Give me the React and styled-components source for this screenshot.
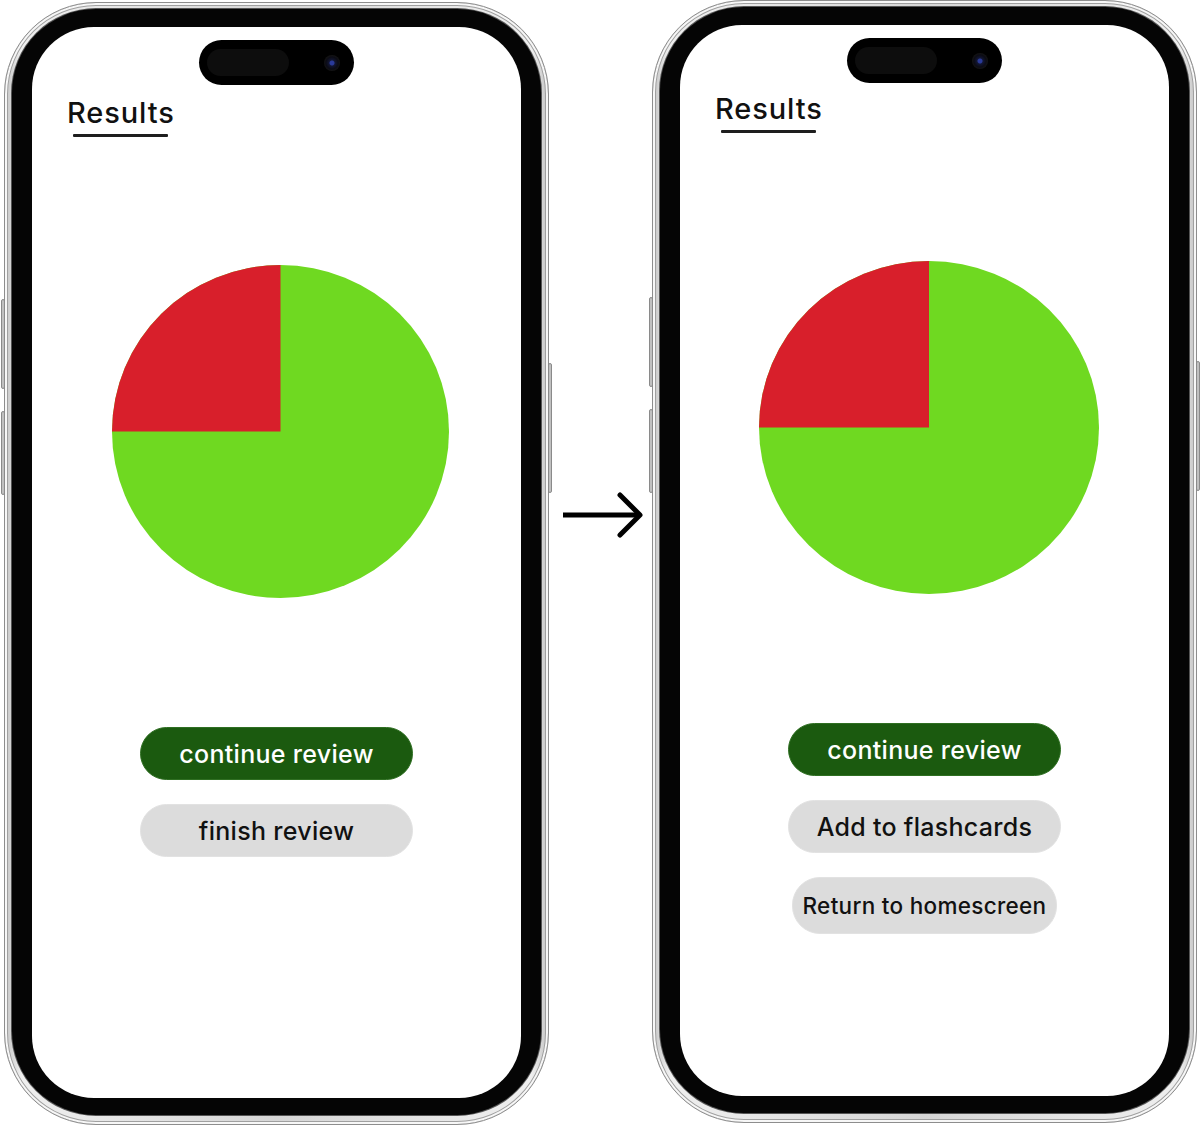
import React from "react";
import styled, { createGlobalStyle } from "styled-components";

const Global = createGlobalStyle`
  html, body { margin: 0; padding: 0; background: #ffffff; }
  body { font-family: Inter, "Noto Sans", "Liberation Sans", sans-serif; }
  * { box-sizing: border-box; }
`;

const Stage = styled.div`
  width: 1200px;
  height: 1127px;
  display: flex;
  align-items: flex-start;
  padding-left: 4px;
  overflow: hidden;
`;

const Phone = styled.div`
  position: relative;
  flex: 0 0 auto;
  width: 545px;
  height: 1123px;
  margin-top: ${(p) => p.$top}px;
  padding: 6px 7px 9px;
  border-radius: 92px;
  background: linear-gradient(90deg, #c4c4c4, #efefef 3%, #d6d6d6 50%, #efefef 97%, #c4c4c4);
  border: 1px solid #8d8d8d;
  box-shadow: inset 0 0 0 2px #f7f7f7, inset 0 0 0 3px #a0a0a0;
`;

const SideButton = styled.span`
  position: absolute;
  top: ${(p) => p.$y}px;
  ${(p) => (p.$side === "left" ? "left: -4px;" : "right: -4px;")}
  width: 4px;
  height: ${(p) => p.$h}px;
  border-radius: 2px;
  background: linear-gradient(90deg, #9a9a9a, #e6e6e6, #9a9a9a);
  border: 1px solid #8a8a8a;
`;

const Bezel = styled.div`
  width: 100%;
  height: 100%;
  padding: 18px 20px 17px;
  border-radius: 84px;
  background: #050505;
  box-shadow: 0 0 0 1px #555;
`;

const Screen = styled.div`
  width: 100%;
  height: 100%;
  border-radius: 62px;
  background: #ffffff;
  display: flex;
  flex-direction: column;
  align-items: center;
  padding-top: ${(p) => p.$pad}px;
  overflow: hidden;
`;

const Island = styled.div`
  width: 155px;
  height: 45px;
  border-radius: 23px;
  background: #000;
  display: flex;
  align-items: center;
  justify-content: space-between;
  padding: 0 14px 0 8px;
`;

const IslandSensor = styled.div`
  width: 82px;
  height: 27px;
  border-radius: 14px;
  background: #0d0d0d;
`;

const Camera = styled.div`
  width: 16px;
  height: 16px;
  border-radius: 50%;
  background: radial-gradient(circle at 50% 50%, #2a3a9a 0 2px, #121633 3px, #0b0b14 6px, #141414 8px);
`;

const Header = styled.div`
  align-self: stretch;
  padding-left: 35px;
  margin-top: ${(p) => p.$mt}px;
  display: flex;
  flex-direction: column;
  align-items: flex-start;
`;

const Title = styled.h1`
  margin: 0;
  font-family: Inter, "Noto Sans", sans-serif;
  font-weight: 500;
  font-size: 29px;
  line-height: 34px;
  letter-spacing: 0.9px;
  color: #111;
`;

const Underline = styled.div`
  width: 95px;
  height: 3px;
  margin-left: 6px;
  margin-top: 4px;
  background: #1e1e1e;
  border-radius: 1px;
`;

const PieWrap = styled.div`
  margin-top: ${(p) => p.$mt}px;
  margin-left: 8px;
  width: ${(p) => p.$w}px;
  height: ${(p) => p.$h}px;
`;

const Buttons = styled.div`
  margin-top: ${(p) => p.$mt}px;
  display: flex;
  flex-direction: column;
  align-items: center;
  gap: ${(p) => p.$gap}px;
`;

const Pill = styled.div`
  width: ${(p) => p.$w || 273}px;
  height: ${(p) => p.$h || 53}px;
  border-radius: 28px;
  display: flex;
  align-items: center;
  justify-content: center;
  font-family: Inter, "Noto Sans", sans-serif;
  font-weight: 500;
  font-size: ${(p) => p.$fs || 25}px;
  letter-spacing: 0.3px;
  background: ${(p) => (p.$primary ? "#1b5a0f" : "#dcdcdc")};
  color: ${(p) => (p.$primary ? "#ffffff" : "#111111")};
  border: 1px solid ${(p) => (p.$primary ? "#2f6f22" : "#e2e2e2")};
`;

const ArrowCol = styled.div`
  flex: 0 0 auto;
  width: 103px;
  display: flex;
  justify-content: center;
  padding-top: 491px;
  padding-left: 5px;
`;

function Pie({ w, h }) {
  return (
    <svg width={w} height={h} viewBox="0 0 200 200" preserveAspectRatio="none">
      <circle cx="100" cy="100" r="100" fill="#6fd921" />
      <path d="M100 100 L0 100 A100 100 0 0 1 100 0 Z" fill="#d81f2b" />
    </svg>
  );
}

function Arrow() {
  return (
    <svg width="82" height="48" viewBox="0 0 82 48">
      <path d="M1 24 H78" stroke="#000" strokeWidth="5" fill="none" />
      <path d="M58 4 L78 24 L58 44" stroke="#000" strokeWidth="5" fill="none" strokeLinecap="round" strokeLinejoin="round" />
    </svg>
  );
}

function Device({ top, pad, titleMt, pieMt, pieW, pieH, btnMt, gap, children }) {
  return (
    <Phone $top={top}>
      <SideButton $side="left" $y={296} $h={90} />
      <SideButton $side="left" $y={408} $h={84} />
      <SideButton $side="right" $y={360} $h={130} />
      <Bezel>
        <Screen $pad={pad}>
          <Island>
            <IslandSensor />
            <Camera />
          </Island>
          <Header $mt={titleMt}>
            <Title>Results</Title>
            <Underline />
          </Header>
          <PieWrap $mt={pieMt} $w={pieW} $h={pieH}>
            <Pie w={pieW} h={pieH} />
          </PieWrap>
          <Buttons $mt={btnMt} $gap={gap}>{children}</Buttons>
        </Screen>
      </Bezel>
    </Phone>
  );
}

export default function App() {
  return (
    <>
      <Global />
      <Stage>
        <Device top={2} pad={13} titleMt={11} pieMt={128} pieW={337} pieH={333} btnMt={129} gap={24}>
          <Pill $primary>continue review</Pill>
          <Pill>finish review</Pill>
        </Device>
        <ArrowCol>
          <Arrow />
        </ArrowCol>
        <Device top={0} pad={13} titleMt={9} pieMt={128} pieW={340} pieH={333} btnMt={129} gap={24}>
          <Pill $primary>continue review</Pill>
          <Pill>Add to flashcards</Pill>
          <Pill $w={265} $h={57} $fs={22.5}>Return to homescreen</Pill>
        </Device>
      </Stage>
    </>
  );
}
